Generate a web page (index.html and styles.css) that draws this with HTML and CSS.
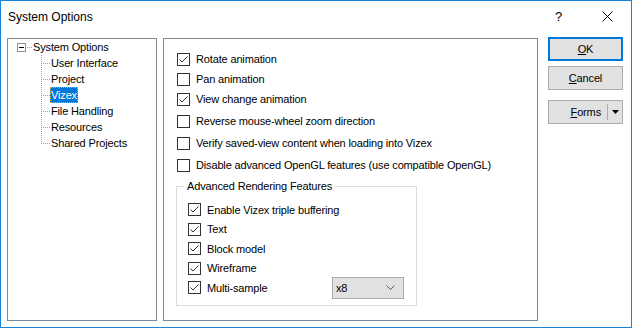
FILE: index.html
```html
<!DOCTYPE html>
<html lang="en">
<head>
    <meta charset="UTF-8">
    <title>System Options</title>
    <link rel="stylesheet" href="styles.css">
</head>
<body>
    <div class="dialog">
        <div class="titlebar">
            <span class="title">System Options</span>
            <span class="help">?</span>
            <span class="close">
                <svg width="11" height="11" viewBox="0 0 11 11"><path d="M0.5 0.5 L10.5 10.5 M10.5 0.5 L0.5 10.5" stroke="#000" stroke-width="1" fill="none"/></svg>
            </span>
        </div>

        <div class="dialog-body">
            <!-- left tree -->
            <div class="tree">
                <div class="tree-root">
                    <span class="expander"><span class="minus"></span></span>
                    <span class="stub"></span>
                    <span class="node">System Options</span>
                </div>
                <div class="tree-item"><span class="twig"></span><span class="node">User Interface</span></div>
                <div class="tree-item"><span class="twig"></span><span class="node">Project</span></div>
                <div class="tree-item"><span class="twig"></span><span class="node selected">Vizex</span></div>
                <div class="tree-item"><span class="twig"></span><span class="node">File Handling</span></div>
                <div class="tree-item"><span class="twig"></span><span class="node">Resources</span></div>
                <div class="tree-item last"><span class="twig"></span><span class="node">Shared Projects</span></div>
            </div>

            <!-- Vizex page -->
            <div class="page">
                <div class="check on"><span class="box"></span>Rotate animation</div>
                <div class="check"><span class="box"></span>Pan animation</div>
                <div class="check on"><span class="box"></span>View change animation</div>
                <div class="check spaced"><span class="box"></span>Reverse mouse-wheel zoom direction</div>
                <div class="check spaced"><span class="box"></span>Verify saved-view content when loading into Vizex</div>
                <div class="check spaced"><span class="box"></span>Disable advanced OpenGL features (use compatible OpenGL)</div>

                <fieldset class="group">
                    <legend>Advanced Rendering Features</legend>
                    <div class="check sub on"><span class="box"></span>Enable Vizex triple buffering</div>
                    <div class="check sub on"><span class="box"></span>Text</div>
                    <div class="check sub on"><span class="box"></span>Block model</div>
                    <div class="check sub on"><span class="box"></span>Wireframe</div>
                    <div class="check sub on">
                        <span class="box"></span>Multi-sample
                        <div class="combo">
                            <span>x8</span>
                            <svg width="9" height="5" viewBox="0 0 9 5"><path d="M0.5 0.5 L4.5 4.5 L8.5 0.5" stroke="#555" fill="none"/></svg>
                        </div>
                    </div>
                </fieldset>
            </div>

            <!-- buttons -->
            <div class="buttons">
                <div class="btn default"><u>O</u>K</div>
                <div class="btn"><u>C</u>ancel</div>
                <div class="btn split">
                    <span class="split-label"><u>F</u>orms</span>
                    <span class="split-sep"></span>
                    <span class="split-arrow">
                        <svg width="7" height="4" viewBox="0 0 7 4"><path d="M0 0 H7 L3.5 4 Z" fill="#000"/></svg>
                    </span>
                </div>
            </div>
        </div>
    </div>
</body>
</html>
```

FILE: styles.css
```css
body {
    margin: 0;
    font-family: "Liberation Sans", Arial, sans-serif;
    font-size: 11px;
    letter-spacing: -0.15px;
    color: #000;
}

.dialog {
    width: 632px;
    height: 328px;
    box-sizing: border-box;
    border: 1px solid #1883d7;
    background: #fff;
}

.titlebar {
    display: flex;
    align-items: center;
    height: 31px;
    padding-left: 7px;
}

.title {
    font-size: 12px;
    letter-spacing: 0;
    flex: 1;
}

.help {
    font-size: 13px;
    width: 12px;
    margin-right: 35px;
}

.close {
    display: flex;
    width: 11px;
    margin-right: 18px;
}

.dialog-body {
    display: flex;
    height: 295px;
    box-sizing: border-box;
    padding: 6px 8px 6px 6px;
}

/* tree panel */
.tree {
    width: 150px;
    box-sizing: border-box;
    border: 1px solid #828790;
    padding-left: 9px;
}

.tree-root {
    display: flex;
    align-items: center;
    height: 16px;
}

.expander {
    width: 9px;
    height: 9px;
    box-sizing: border-box;
    border: 1px solid #919191;
    display: flex;
    align-items: center;
    justify-content: center;
}

.minus {
    width: 5px;
    height: 1px;
    background: #000;
}

.stub {
    width: 5px;
    height: 1px;
    margin-left: 1px;
    background: repeating-linear-gradient(to right, #a0a0a0 0 1px, transparent 1px 2px);
}

.node {
    padding: 0 1px;
    line-height: 16px;
    white-space: nowrap;
}

.tree-item {
    display: flex;
    height: 16px;
    margin-left: 24px;
}

.twig {
    width: 9px;
    height: 16px;
    background:
        repeating-linear-gradient(to bottom, #a0a0a0 0 1px, transparent 1px 2px) left top / 1px 100% no-repeat,
        repeating-linear-gradient(to right, #a0a0a0 0 1px, transparent 1px 2px) 2px 8px / 7px 1px no-repeat;
}

.tree-item.last .twig {
    background:
        repeating-linear-gradient(to bottom, #a0a0a0 0 1px, transparent 1px 2px) left top / 1px 9px no-repeat,
        repeating-linear-gradient(to right, #a0a0a0 0 1px, transparent 1px 2px) 2px 8px / 7px 1px no-repeat;
}

.node.selected {
    background: #0078d7;
    color: #fff;
    outline: 1px dotted #f4a23c;
    outline-offset: -1px;
}

/* options page */
.page {
    width: 375px;
    box-sizing: border-box;
    margin-left: 6px;
    border: 1px solid #828790;
    padding: 10px 0 0 12px;
}

.check {
    display: flex;
    align-items: center;
    height: 20px;
    padding-left: 1px;
    white-space: nowrap;
}

.check.spaced {
    margin-top: 2px;
}

.box {
    width: 13px;
    height: 13px;
    box-sizing: border-box;
    border: 1px solid #333;
    background: #fff no-repeat center;
    margin-right: 6px;
    flex: none;
}

.check.on .box {
    background-image: url("data:image/svg+xml,%3Csvg xmlns='http://www.w3.org/2000/svg' width='11' height='11'%3E%3Cpath d='M1.5 5.5 L4 8 L9.5 2.5' stroke='%23333' stroke-width='1' fill='none'/%3E%3C/svg%3E");
}

.group {
    width: 241px;
    box-sizing: border-box;
    margin: 4px 0 0 0;
    padding: 0 12px 7px 7px;
    border: 1px solid #dcdcdc;
}

.group legend {
    padding: 0 3px;
    line-height: 15px;
}

.check.sub {
    height: 19.5px;
    padding-left: 4px;
}

.check.sub:first-of-type {
    margin-top: 6px;
}

.combo {
    margin-left: auto;
    width: 72px;
    height: 22px;
    box-sizing: border-box;
    border: 1px solid #adadad;
    background: #e1e1e1;
    display: flex;
    align-items: center;
    justify-content: space-between;
    padding: 0 8px 0 3px;
}

/* buttons */
.buttons {
    width: 75px;
    margin-left: 10px;
    margin-top: -1px;
    display: flex;
    flex-direction: column;
    gap: 5px;
}

.btn {
    height: 24px;
    box-sizing: border-box;
    border: 1px solid #adadad;
    background: #e1e1e1;
    display: flex;
    align-items: center;
    justify-content: center;
}

.btn.default {
    border: 2px solid #0078d7;
}

.btn.split {
    margin-top: 5px;
    justify-content: flex-end;
}

.split-label {
    margin-right: 6px;
}

.split-sep {
    width: 1px;
    height: 16px;
    background: #adadad;
}

.split-arrow {
    display: flex;
    width: 14px;
    justify-content: center;
}
```
